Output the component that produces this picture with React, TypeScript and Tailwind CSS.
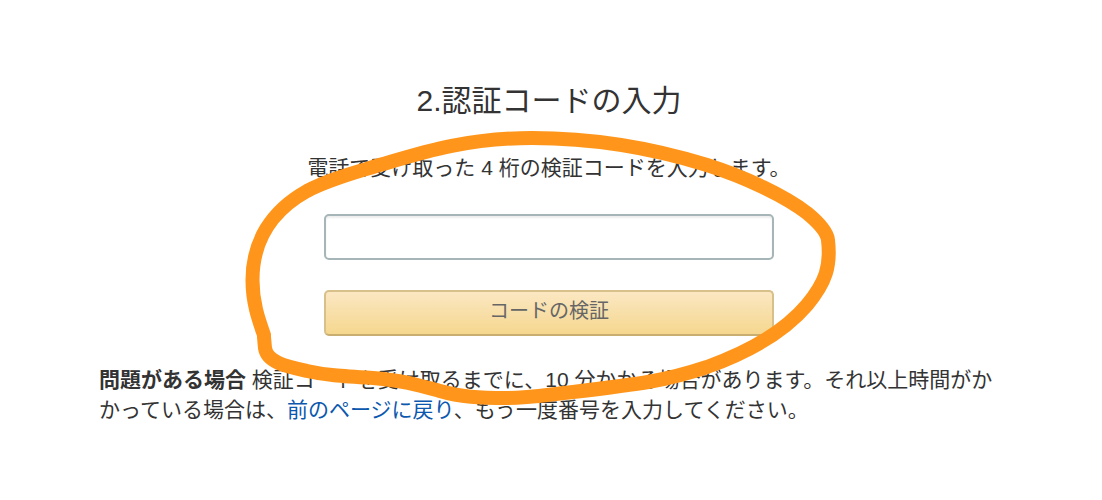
import React from "react";

function Marker() {
  return (
    <svg
      aria-hidden="true"
      viewBox="99 0 900 500"
      className="pointer-events-none absolute top-0 left-1/2 h-[500px] w-[900px] -translate-x-1/2"
    >
      <path
        d="M264 335C258 318 252.5 302 252.5 280C252.5 242 271 211 307 191C328 180 350 174 373 167C412 156 460 138 532 138C592 138 652 148 707 165C745 177 785 196 807 213C818 222 827 232 828 240C831 266 826 282 807 305C790 325 760 348 707 367C665 381 640 384 573 392C545 395 530 398 507 398C480 398 460 397 440 391C415 384 405 381 373 378C340 376 325 375 307 371C285 366 267 362 265 348L264 337"
        fill="none"
        stroke="#ff961b"
        strokeWidth="14"
        strokeLinecap="round"
        strokeLinejoin="round"
      />
    </svg>
  );
}

export default function App() {
  return (
    <main
      lang="ja"
      className="min-h-screen bg-white pr-[103px] pl-[99px] font-['Liberation_Sans','Noto_Sans_CJK_JP',sans-serif] text-[21px] leading-[30px] text-[#333333]"
    >
      <div className="relative mx-auto max-w-[900px] pt-[81px] pb-16">
        <h1 className="text-center text-[30px] leading-[40px]">2.認証コードの入力</h1>
        <form
          className="mt-8 flex flex-col items-center"
          onSubmit={(event) => event.preventDefault()}
        >
          <label htmlFor="code" className="text-center">
            電話で受け取った 4 桁の検証コードを入力します。
          </label>
          <input
            id="code"
            type="text"
            inputMode="numeric"
            maxLength={4}
            className="mt-[31px] h-[46px] w-full max-w-[450px] rounded-[5px] border-2 border-[#a6b5b7] bg-white px-3 shadow-[inset_0_2px_2px_#eeeeee] outline-none"
          />
          <button
            type="submit"
            className="mt-[30px] h-[46px] w-full max-w-[450px] rounded-[5px] border-2 border-[#d8c08a] border-b-[#c9ae72] bg-linear-to-b from-[#fbe7c2] to-[#f5d78e] pb-1 text-[20px] leading-[30px] text-[#666666]"
          >
            コードの検証
          </button>
        </form>
        <p className="mt-[29px]">
          <strong className="font-bold">問題がある場合</strong>{" "}
          検証コードを受け取るまでに、10 分かかる場合があります。それ以上時間がかかっている場合は、
          <a href="#" className="text-[#0b58ae]">前のページに戻り</a>
          、もう一度番号を入力してください。
        </p>
        <Marker />
      </div>
    </main>
  );
}
